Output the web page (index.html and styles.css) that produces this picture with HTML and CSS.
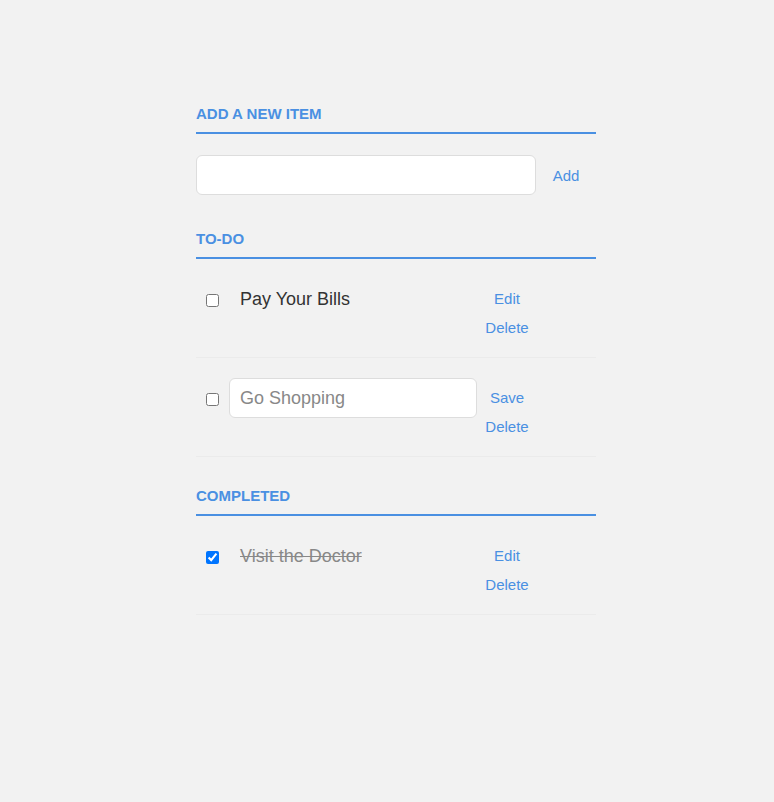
FILE: index.html
```html
<!DOCTYPE html>
<html>
<head>
<meta charset="utf-8">
<title>Todo</title>
<link rel="stylesheet" href="styles.css">
</head>
<body>
<div class="container">
  <h3 class="section-title first">Add a new item</h3>
  <div class="new-item">
    <input class="text-input new-input" type="text">
    <button class="link-btn">Add</button>
  </div>

  <h3 class="section-title">To-Do</h3>
  <ul class="task-list">
    <li class="task">
      <input class="task-check" type="checkbox">
      <label class="task-label">Pay Your Bills</label>
      <div class="task-actions">
        <button class="link-btn">Edit</button>
        <button class="link-btn">Delete</button>
      </div>
    </li>
    <li class="task">
      <input class="task-check" type="checkbox">
      <input class="text-input task-input" type="text" value="Go Shopping">
      <div class="task-actions">
        <button class="link-btn">Save</button>
        <button class="link-btn">Delete</button>
      </div>
    </li>
  </ul>

  <h3 class="section-title">Completed</h3>
  <ul class="task-list">
    <li class="task done">
      <input class="task-check" type="checkbox" checked>
      <label class="task-label">Visit the Doctor</label>
      <div class="task-actions">
        <button class="link-btn">Edit</button>
        <button class="link-btn">Delete</button>
      </div>
    </li>
  </ul>
</div>
</body>
</html>
```

FILE: styles.css
```css
html, body {
  margin: 0;
  padding: 0;
}

body {
  background: #f2f2f2;
  color: #333;
  font-family: "Liberation Sans", Arial, sans-serif;
  padding-left: 18px;
}

.container {
  width: 400px;
  margin: 0 auto;
  padding-top: 75px;
}

.section-title {
  margin: 0;
  padding: 30px 0 10px;
  font-size: 15px;
  line-height: 17px;
  font-weight: 700;
  text-transform: uppercase;
  color: #4a90e2;
  border-bottom: 2px solid #4a90e2;
}

.new-item {
  display: flex;
  align-items: center;
  margin: 21px 0 5px;
}

.text-input {
  box-sizing: border-box;
  height: 40px;
  margin: 0;
  padding: 10px;
  font-family: "Liberation Sans", Arial, sans-serif;
  font-size: 18px;
  line-height: 18px;
  color: #888;
  background: #fff;
  border: 1px solid #ddd;
  border-radius: 6px;
  outline: none;
}

.new-input {
  width: 340px;
}

.link-btn {
  display: block;
  width: 60px;
  margin: 0;
  padding: 1px 6px;
  background: none;
  border: 0;
  font-family: "Liberation Sans", Arial, sans-serif;
  font-size: 15px;
  line-height: 17px;
  color: #4a90e2;
  text-align: center;
  cursor: pointer;
}

.task-list {
  margin: 0;
  padding: 0;
  list-style: none;
}

.task {
  display: flex;
  align-items: flex-start;
  padding: 20px 0;
  border-bottom: 1px solid #ebebeb;
}

.task-check {
  width: 13px;
  height: 13px;
  margin: 15px 10px 0;
  flex: none;
}

.task-label {
  box-sizing: content-box;
  width: 237px;
  padding-left: 11px;
  font-size: 18px;
  line-height: 40px;
  color: #333;
}

.task-input {
  width: 248px;
}

.task-actions {
  display: flex;
  flex-direction: column;
  width: 60px;
}

.task-actions .link-btn {
  margin-top: 10px;
}

.done .task-label {
  color: #888;
  text-decoration: line-through;
}
```
